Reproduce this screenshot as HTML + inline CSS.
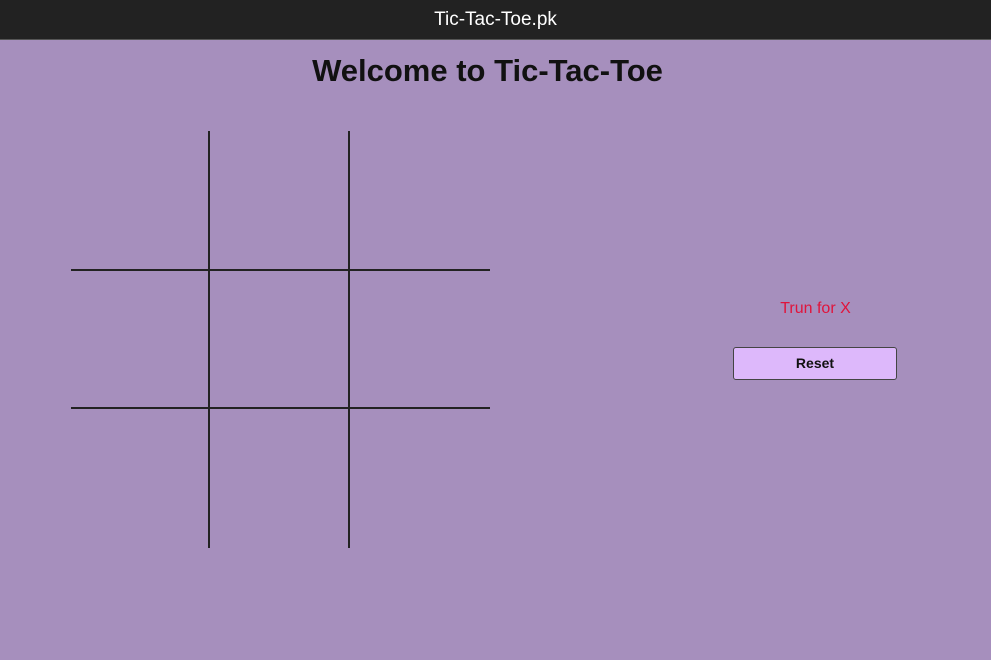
<!DOCTYPE html>
<html><head><style>
html,body{margin:0;padding:0;width:991px;height:660px;overflow:hidden;background:#a68fbd;font-family:"Liberation Sans",sans-serif}
.top{position:absolute;left:0;top:0;width:991px;height:39px;background:#222;color:#fff;font-size:19px;text-align:center;line-height:40px;border-bottom:1px solid #555}
h1{position:absolute;top:53px;left:-8px;width:991px;margin:0;text-align:center;font-size:31px;font-weight:bold;color:#111}
.l{position:absolute;background:#222}
.turn{position:absolute;left:734px;width:163px;top:300px;text-align:center;color:#e0143c;font-size:16px}
.btn{position:absolute;left:733px;top:347px;width:162px;height:31px;background:#ddb8fb;border:1px solid #444;border-radius:3px;text-align:center;line-height:31px;font-size:14px;font-weight:bold;color:#111}
</style></head><body>
<div class="top">Tic-Tac-Toe.pk</div>
<h1>Welcome to Tic-Tac-Toe</h1>
<div class="l" style="left:208px;top:131px;width:2px;height:417px"></div>
<div class="l" style="left:348px;top:131px;width:2px;height:417px"></div>
<div class="l" style="left:71px;top:269px;width:419px;height:2px"></div>
<div class="l" style="left:71px;top:407px;width:419px;height:2px"></div>
<div class="turn">Trun for X</div>
<div class="btn">Reset</div>
</body></html>
